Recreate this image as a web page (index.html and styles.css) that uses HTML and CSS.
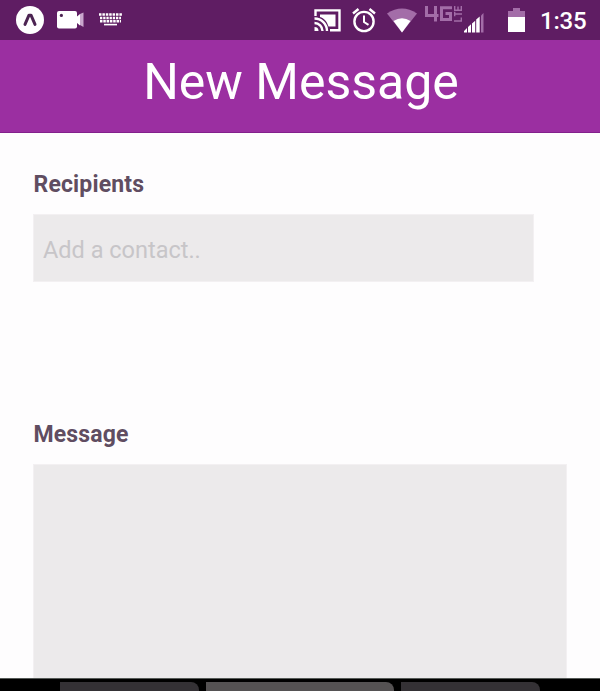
FILE: index.html
```html
<!DOCTYPE html>
<html lang="en">
<head>
<meta charset="utf-8">
<title>New Message</title>
<link rel="stylesheet" href="styles.css">
</head>
<body>
<div class="phone">
  <div class="status-bar">
    <svg class="expo" width="28" height="28" viewBox="0 0 28 28"><circle cx="14" cy="14" r="14" fill="#fff"/><path d="M9 18.4 13 9.2H15L19 18.4" fill="none" stroke="#4c2452" stroke-width="3" stroke-linecap="round" stroke-linejoin="round"/></svg>
    <svg class="camera" width="27" height="18" viewBox="0 0 27 18"><rect width="20" height="17.5" rx="2" fill="#fff"/><circle cx="4.4" cy="4.4" r="1.6" fill="#4c2452"/><path d="M20 5.500 23 3V14.500L20 12Z" fill="#fff"/><path d="M23 3 26.500 1.500V16L23 14Z" fill="#c9a6cd"/></svg>
    <svg class="keyboard" width="23" height="13" viewBox="0 0 23 13"><g fill="none" stroke="#fff" stroke-width="2.400"><path d="M0 1.500H23" stroke-dasharray="2.500 .9"/><path d="M1 5H22" stroke-dasharray="2.300 .9"/><path d="M1 8.300H22" stroke-dasharray="2.500 .8"/></g><path d="M5 11.600H18" stroke="#fff" stroke-width="1.600"/></svg>
    <svg class="cast" width="27" height="23" viewBox="0 0 27 23"><g fill="none" stroke="#fff" stroke-width="2.400"><path d="M1.500 7V1.400H25.500V21.200H16"/><path d="M.5 9.500A12.500 12.500 0 0 1 13 22M.5 14A8 8 0 0 1 8.500 22"/></g><path d="M.5 18A4 4 0 0 1 4.500 22H.5Z" fill="#fff"/><path d="M6 5.500H21.500V17.500H14.500C13 12.500 10 9 6 8Z" fill="#fff"/></svg>
    <svg class="alarm" width="24" height="25" viewBox="0 0 24 25"><g fill="none" stroke="#fff" stroke-width="2.400"><circle cx="12" cy="13.500" r="9.600"/><path d="M1 5.500 6.500 1M17.500 1 23 5.500"/><path d="M12 7.500V14L16.500 16.800" stroke-width="2"/></g></svg>
    <svg class="wifi" width="30" height="25" viewBox="0 0 30 25"><path d="M0 5.500Q15-4.500 30 5.500L15 24.500Z" fill="#a36da8"/><path d="M6.500 13Q15 7.500 23.500 13L15 24.500Z" fill="#fff"/></svg>
    <svg class="network" width="37" height="17" viewBox="0 0 37 17"><g fill="none" stroke="#a36da8" stroke-width="3"><path d="M1.500 0V9.500H13.500M10.500 0V15.500"/><path d="M27 1.700H16.500V13.500H25.500V7.500H20.500"/></g><g fill="none" stroke="#a36da8" stroke-width="1.400"><path d="M29.700 0V4.200H36.300V0M33 .5V4"/><path d="M29.700 5.800V10.200M29.700 8H37"/><path d="M29 15H36.300V11.500"/></g></svg>
    <svg class="signal" width="20" height="20" viewBox="0 0 20 20"><path d="M17 2.500 19.500 0V19.500H17Z" fill="#a36da8"/><path d="M0 19.500V18L3 15V19.500ZM4 19.500V14L7 11.300V19.500ZM8 19.500V10.500L11.200 7.800V19.500ZM12.200 19.500V6.500L15.700 3.500V19.500Z" fill="#fff"/></svg>
    <svg class="battery" width="17" height="24" viewBox="0 0 17 24"><path d="M0 10V3H5V0H12V3H17V10Z" fill="#a36da8"/><path d="M0 9H17V24H0Z" fill="#fff"/></svg>
    <span class="clock">1:35</span>
  </div>
  <header class="title-bar"><h1>New Message</h1></header>
  <main class="form">
    <label class="label" for="recipients">Recipients</label>
    <input class="recipients" id="recipients" placeholder="Add a contact..">
    <label class="label message-label" for="message">Message</label>
    <textarea class="message" id="message"></textarea>
  </main>
  <footer class="suggestions"><div class="key"></div><div class="key key-main"></div><div class="key"></div></footer>
</div>
</body>
</html>
```
FILE: styles.css
```css
* { box-sizing: border-box; }
body { margin: 0; font-family: Roboto, sans-serif; background: #fefdfe; }
.phone { width: 600px; height: 691px; display: flex; flex-direction: column; overflow: hidden; }
.status-bar { height: 40px; flex: none; display: flex; align-items: flex-start; padding-left: 16px; background: #5f1d63; }
.status-bar svg { flex: none; }
.expo { margin-top: 6px; }
.camera { margin: 11px 0 0 13px; }
.keyboard { margin: 13px 0 0 15px; }
.cast { margin: 9px 0 0 192px; }
.alarm { margin: 8px 0 0 11px; }
.wifi { margin: 8px 0 0 11px; }
.network { margin: 6px 0 0 8px; }
.signal { margin: 13px 0 0 2px; }
.battery { margin: 8px 0 0 24px; }
.clock { margin: 7px 0 0 15px; font-size: 24px; line-height: 28px; font-weight: 500; letter-spacing: -.2px; color: #fff; white-space: nowrap; }
.title-bar { height: 93px; flex: none; background: #9b2fa1; border-bottom: 1px solid #83208c; text-align: center; }
.title-bar h1 { margin: 12px 0 0; padding-left: 2px; font-size: 50px; line-height: 60px; font-weight: 400; color: #fff; }
.form { height: 545px; flex: none; padding: 38px 33px 0; display: flex; flex-direction: column; overflow: hidden; }
.label { flex: none; height: 28px; padding-left: .5px; line-height: 28px; font-size: 23px; font-weight: 700; letter-spacing: .15px; color: #604d61; }
.recipients, .message { font: 23.5px/28px Roboto, sans-serif; background: #eceaeb; border: 1px solid #f3f0f2; border-radius: 0; outline: 0; flex: none; }
.recipients { margin-top: 15px; width: 501px; height: 68px; padding: 3px 9px 0; }
.recipients::placeholder { color: #c7c5c8; opacity: 1; }
.message-label { margin-top: 139px; }
.message { margin-top: 15px; width: 534px; height: 230px; resize: none; }
.suggestions { height: 13px; flex: none; display: flex; gap: 7px; padding: 3px 60px 0; background: #000; border-top: 1px solid #555a57; }
.key { width: 139px; height: 20px; flex: none; border-radius: 0 8px 0 0; background: #343135; }
.key-main { width: 188px; background: #555253; }
```
